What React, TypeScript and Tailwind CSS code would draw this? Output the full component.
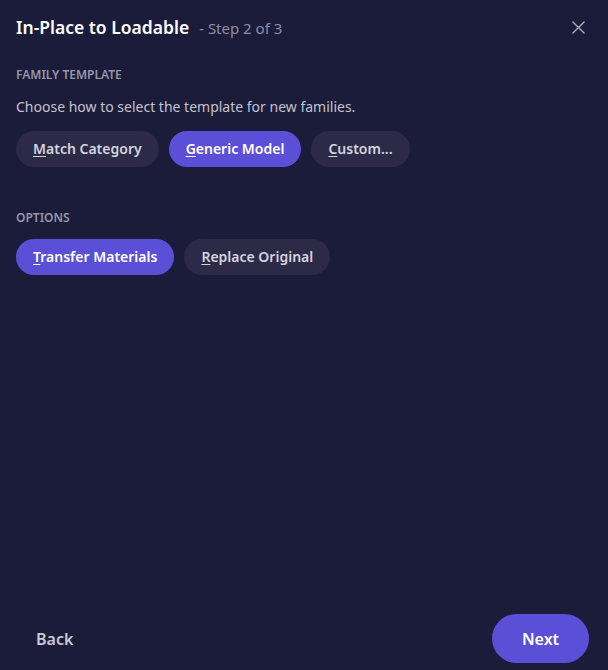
import React from "react";

const font = { fontFamily: '"Noto Sans", "Open Sans", sans-serif' };

function Pill({ label, active }: { label: string; active?: boolean }) {
  const first = label.charAt(0);
  const rest = label.slice(1);
  return (
    <button
      className={
        "h-[36px] rounded-full px-[17px] text-[14px] font-semibold leading-none " +
        (active ? "bg-[#5b4fd8] text-white" : "bg-[#2c2a47] text-[#d4d3de]")
      }
    >
      <span className="underline underline-offset-2">{first}</span>
      {rest}
    </button>
  );
}

export default function App() {
  return (
    <div className="flex h-[670px] w-[608px] flex-col bg-[#1b1b3a]" style={font}>
      <div className="flex items-center justify-between pl-[16px] pr-[23px] pt-[14px]">
        <div className="flex items-baseline gap-[10px]">
          <span className="text-[17.5px] font-semibold text-white">In-Place to Loadable</span>
          <span className="text-[15px] text-[#8f8ea3]">- Step 2 of 3</span>
        </div>
        <svg width="13" height="13" viewBox="0 0 14 14" className="text-[#a8a7b6]">
          <path d="M1 1L13 13M13 1L1 13" stroke="currentColor" strokeWidth="1.5" strokeLinecap="round" />
        </svg>
      </div>

      <div className="px-[16px] pt-[26px]">
        <div className="text-[12px] font-semibold uppercase text-[#9796a8]">Family Template</div>
        <div className="mt-[12px] text-[14px] text-[#c4c3d0]">
          Choose how to select the template for new families.
        </div>
        <div className="mt-[14px] flex gap-[10px]">
          <Pill label="Match Category" />
          <Pill label="Generic Model" active />
          <Pill label="Custom..." />
        </div>

        <div className="mt-[42px] text-[12px] font-semibold uppercase text-[#9796a8]">Options</div>
        <div className="mt-[12px] flex gap-[10px]">
          <Pill label="Transfer Materials" active />
          <Pill label="Replace Original" />
        </div>
      </div>

      <div className="mt-auto flex items-center justify-between pb-[7px] pl-[36px] pr-[19px]">
        <button className="text-[16px] font-semibold text-[#c9c8d3]">Back</button>
        <button className="h-[49px] w-[97px] rounded-full bg-[#5b4fd8] text-[16px] font-semibold text-white">
          Next
        </button>
      </div>
    </div>
  );
}
